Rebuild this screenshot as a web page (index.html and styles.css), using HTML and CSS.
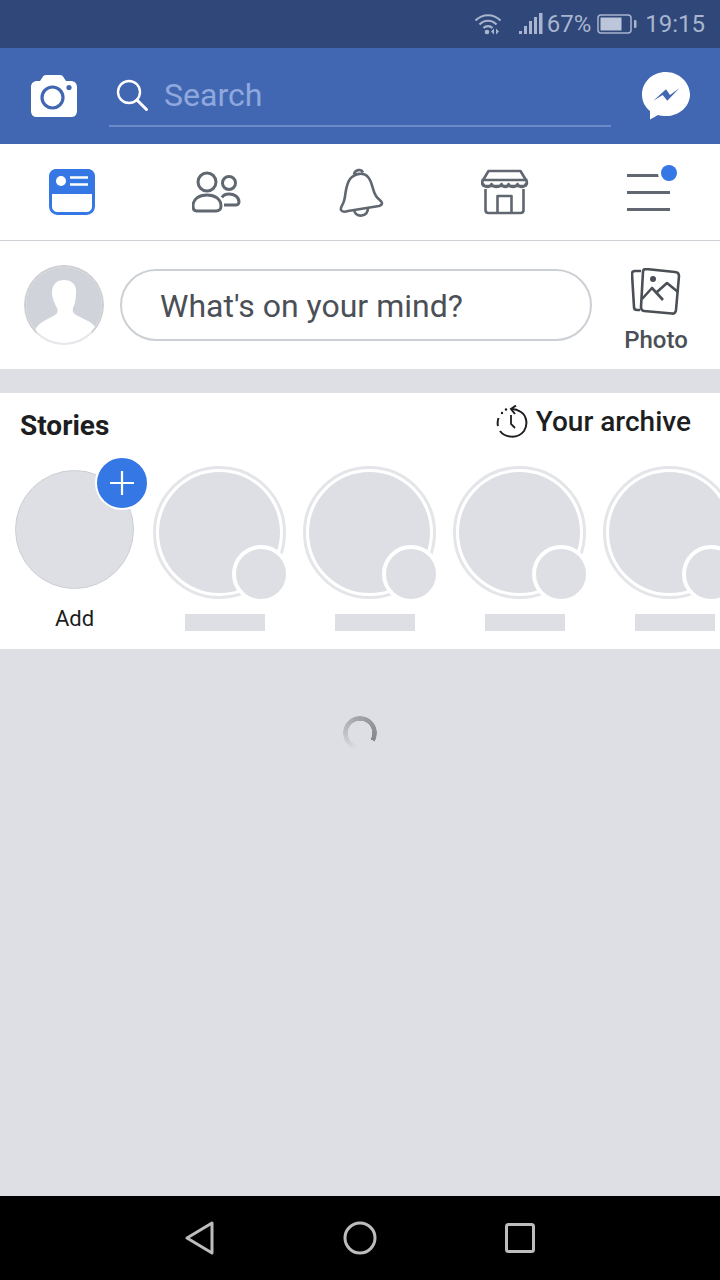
FILE: index.html
```html
<!DOCTYPE html>
<html lang="en">

<head>
	<meta charset="UTF-8">
	<meta name="viewport" content="width=device-width, initial-scale=1.0">
	<title>Facebook</title>
	<link rel="stylesheet" href="styles.css">
</head>

<body>
	<div class="phone">
		<div class="status-bar">
			<svg class="wifi" width="28" height="22" viewBox="0 0 28 22">
				<path d="M1.500 7.500C8.500 .5 19.500 .5 26.500 7.500M5.500 11.500C10.500 6.500 17.500 6.500 22.500 11.500M9.500 15C12 12.500 16 12.500 18.500 15" fill="none" stroke="#a9b5cf" stroke-width="2.200" />
				<circle cx="13" cy="19" r="2.300" fill="#a9b5cf" />
				<path d="M20 15.500v6l-3-3zM22 15.500v6l3-3z" fill="#a9b5cf" />
			</svg>
			<svg class="signal" width="25" height="22" viewBox="0 0 25 22">
				<rect x="0" y="18" width="3" height="3" fill="#a9b5cf" />
				<rect x="5" y="13" width="3" height="8" fill="#a9b5cf" />
				<rect x="10" y="8" width="3" height="13" fill="#a9b5cf" />
				<rect x="15" y="4" width="3" height="17" fill="#a9b5cf" />
				<rect x="20" y="0" width="3.500" height="21" fill="#a9b5cf" />
			</svg>
			<span class="percent">67%</span>
			<svg class="battery" width="40" height="20" viewBox="0 0 40 20">
				<rect x="1" y="1" width="33" height="18" rx="3" fill="none" stroke="#a9b5cf" stroke-width="1.500" />
				<rect x="3.500" y="3.500" width="21" height="13" fill="#bcc6da" />
				<rect x="37" y="6" width="2.500" height="8" rx="1" fill="#a9b5cf" />
			</svg>
			<span class="clock">19:15</span>
		</div>

		<div class="search-bar">
			<svg class="camera" width="46" height="42" viewBox="0 0 46 42">
				<path d="M6 6h3l2-3c1-2 2-3 4-3h14c2 0 3 1 4 3l2 3h5c3 0 6 2 6 6v24c0 3-2 6-5 6H5c-3 0-5-3-5-6V12c0-4 3-6 6-6z" fill="#fff" />
				<circle cx="21.500" cy="22.500" r="10.500" fill="none" stroke="#4267b2" stroke-width="3.200" />
				<circle cx="38" cy="12.500" r="2.600" fill="#4267b2" />
			</svg>
			<div class="search-field">
				<svg class="search-icon" width="34" height="36" viewBox="0 0 34 36">
					<circle cx="13" cy="13" r="11" fill="none" stroke="#fff" stroke-width="2.400" />
					<path d="M21 21l9.500 9.500" stroke="#fff" stroke-width="3" stroke-linecap="round" />
				</svg>
				<span>Search</span>
			</div>
			<svg class="messenger" width="50" height="50" viewBox="0 0 50 50">
				<path d="M25 1C11.500 1 1 11 1 23.500 1 30.500 4 36 9 40v8.500l8-4.500c2.500 .7 5 1.100 8 1.100 13.500 0 24-10 24-21.600S38.500 1 25 1z" fill="#fff" />
				<path d="M12.300 29.700L25 18.300l4 5.700 9.300-6.700-12 12.400-4.600-5.700z" fill="#4267b2" />
			</svg>
		</div>

		<div class="tabs">
			<svg width="48" height="48" viewBox="0 0 48 48">
				<rect x="2.500" y="2.500" width="43" height="43" rx="7" fill="#fff" stroke="#3578e5" stroke-width="3" />
				<path d="M8 1h32a7 7 0 0 1 7 7v18H1V8a7 7 0 0 1 7-7z" fill="#3578e5" />
				<circle cx="13" cy="13" r="5" fill="#fff" />
				<path d="M22 9.500h18M22 16.500h18" stroke="#fff" stroke-width="2.600" />
			</svg>
			<svg width="50" height="48" viewBox="1 0 50 48" fill="none" stroke="#606770" stroke-width="3">
				<circle cx="16" cy="14" r="9" />
				<circle cx="38" cy="15" r="6.500" />
				<path d="M31 29.500c1-2 4-3.500 7-3.500 5 0 10 2.500 10 8 0 2-2 3-3 3h-12" />
				<path d="M2 38c0-7 6-11 14-11s14 4 14 11c0 3-2 5-5 5H6c-3 0-4-2-4-5z" />
			</svg>
			<svg width="46" height="50" viewBox="0 0 46 50" fill="none" stroke="#606770" stroke-width="2.600" stroke-linejoin="round">
				<path d="M15 7.500c1-5 7-6 9-2" />
				<path d="M11 12c5-6 14-7 18-2 5 6 4 13 8 19 2 3 6 5 6 7 0 1.500-1 2.500-3 3L9 44c-3 1-6 1-7-1-1-3 2-5 3-9 2-6 1-15 6-22z" />
				<path d="M15 43c1 4 4 6 8 5.500 3-.5 6-3 6-8" />
			</svg>
			<svg width="50" height="48" viewBox="1.500 0 50 48" fill="none" stroke="#606770" stroke-width="2.600" stroke-linejoin="round">
				<path d="M9 3h32l6 10c1 2 0 5-2 5H5c-2 0-3-3-2-5z" />
				<path d="M2 12h46" />
				<path d="M3 15c2 5 7 5 9 1 2 4 8 4 10 0 2 4 6 4 7 0 2 4 7 4 9 0 2 4 7 4 9-1" />
				<path d="M6 21v21c0 2 1 3 3 3h32c2 0 3-1 3-3V21" />
				<path d="M18 45V28h14v17" />
			</svg>
			<div class="menu-icon">
				<span></span>
				<span></span>
				<span></span>
				<i class="menu-dot"></i>
			</div>
		</div>

		<div class="composer">
			<div class="avatar">
				<svg width="76" height="76" viewBox="0 0 76 76">
					<path d="M0 76V0h76v76z" fill="#d0d3d9" />
					<path d="M26 26c0-9 5-13 12-13s13 4 12 13c0 5-1 11-3 15-1 3 0 5 3 7l12 6c4 2 7 5 9 9l5 13H0l9-13c2-4 5-7 9-9l11-6c3-2 3-4 2-7-2-4-5-10-5-15z" fill="#fff" />
				</svg>
			</div>
			<div class="mind">What's on your mind?</div>
			<div class="photo">
				<svg width="50" height="48" viewBox="0 0 50 48" fill="none" stroke="#4b4f56" stroke-width="2.600" stroke-linejoin="round">
					<path d="M10 3H4c-2 0-3 1-3 3l2 33c0 2 1 3 3 3h3" />
					<path d="M15 1l29 3c3 .3 4 2 4 4l-3 34c0 2-2 4-4 3.500L13 43c-2 0-3-2-3-4l2-35c0-2 1-3 3-3z" />
					<path d="M11 31l10-11 11 12M26 24l10-9 11 9" />
					<circle cx="22" cy="11" r="3" fill="#4b4f56" stroke="none" />
				</svg>
				<span>Photo</span>
			</div>
		</div>

		<div class="stories">
			<div class="stories-head">
				<h2>Stories</h2>
				<div class="archive">
					<svg width="32" height="34" viewBox="0 0 32 34" fill="none" stroke="#1c1e21" stroke-width="2">
						<path d="M2.500 13c-1 3-1 6-.5 8M4 26c5 7 18 8 24 0 4-6 3-15-3-19-3-2-6-3-9-3" />
						<path d="M20 .5L15 4l4 5" stroke-linejoin="miter" />
						<path d="M15 10v9l4 4" stroke-width="1.800" />
						<circle cx="6" cy="8" r="1.200" fill="#1c1e21" stroke="none" />
						<circle cx="10" cy="4.500" r="1.200" fill="#1c1e21" stroke="none" />
					</svg>
					<span>Your archive</span>
				</div>
			</div>
			<div class="story-row">
				<div class="story-add">
					<div class="add-circle">
						<div class="add-badge">
							<svg width="26" height="26" viewBox="0 0 26 26">
								<path d="M13 1v24M1 13h24" stroke="#fff" stroke-width="2.200" />
							</svg>
						</div>
					</div>
					<span>Add</span>
				</div>
				<div class="story">
					<div class="story-ring"><i class="story-thumb"></i></div>
					<div class="story-name"></div>
				</div>
				<div class="story">
					<div class="story-ring"><i class="story-thumb"></i></div>
					<div class="story-name"></div>
				</div>
				<div class="story">
					<div class="story-ring"><i class="story-thumb"></i></div>
					<div class="story-name"></div>
				</div>
				<div class="story">
					<div class="story-ring"><i class="story-thumb"></i></div>
					<div class="story-name"></div>
				</div>
			</div>
		</div>

		<div class="feed">
			<div class="spinner"></div>
		</div>

		<div class="nav-bar">
			<svg width="32" height="36" viewBox="0 0 32 36">
				<path d="M3 18L28 3v30z" fill="none" stroke="#bdbdbd" stroke-width="3" stroke-linejoin="round" />
			</svg>
			<svg width="34" height="34" viewBox="0 0 34 34">
				<circle cx="17" cy="17" r="15" fill="none" stroke="#bdbdbd" stroke-width="3" />
			</svg>
			<svg width="32" height="32" viewBox="0 0 32 32">
				<rect x="2.500" y="2.500" width="27" height="27" rx="2" fill="none" stroke="#bdbdbd" stroke-width="3" />
			</svg>
		</div>
	</div>
</body>

</html>
```

FILE: styles.css
```css
*,
*:before,
*:after {
	box-sizing: border-box;
}

html {
	font: normal 16px/1.2 Roboto, "Liberation Sans", sans-serif;
}

body {
	margin: 0;
	padding: 0;
	background-color: #dddfe4;
	color: #1c1e21;
}

svg {
	display: block;
	flex: 0 0 auto;
}

.phone {
	width: 720px;
	height: 1280px;
	overflow: hidden;
	display: flex;
	flex-direction: column;
}

/* status bar */
.status-bar {
	flex: 0 0 48px;
	display: flex;
	align-items: center;
	justify-content: flex-end;
	padding-right: 15px;
	background-color: #2f4779;
	color: #a9b5cf;
	font-size: 24px;
}

.status-bar .wifi {
	margin-right: 17px;
}

.status-bar .percent {
	margin-left: 3px;
	margin-right: 6px;
}

.status-bar .clock {
	margin-left: 8px;
}

/* blue header */
.search-bar {
	flex: 0 0 96px;
	display: flex;
	align-items: center;
	padding-left: 31px;
	background-color: #4267b2;
}

.search-bar .camera {
	margin-right: 32px;
}

.search-field {
	width: 502px;
	height: 50px;
	margin-top: 12px;
	padding: 0 0 12px 7px;
	display: flex;
	align-items: center;
	gap: 14px;
	border-bottom: 2px solid #6b8aca;
	color: #8fa8dd;
	font-size: 32px;
}

.search-icon {
	margin-top: 4px;
}

.search-bar .messenger {
	margin-left: 30px;
}

/* tabs */
.tabs {
	flex: 0 0 97px;
	display: flex;
	align-items: center;
	justify-content: space-between;
	padding: 0 50px 0 48px;
	background-color: #fff;
	border-bottom: 1px solid #ccd0d5;
}

.menu-icon {
	position: relative;
	width: 43px;
	display: flex;
	flex-direction: column;
	gap: 14px;
}

.menu-icon span {
	display: block;
	height: 3px;
	background-color: #606770;
}

.menu-dot {
	position: absolute;
	top: -9px;
	right: -7px;
	width: 16px;
	height: 16px;
	border-radius: 50%;
	background-color: #3578e5;
	box-shadow: 0 0 0 3px #fff;
}

/* composer */
.composer {
	flex: 0 0 128px;
	display: flex;
	align-items: center;
	padding-left: 24px;
	background-color: #fff;
}

.avatar {
	width: 80px;
	height: 80px;
	border-radius: 50%;
	border: 2px solid #ced0d4;
	border-bottom-color: #e6e7ea;
	overflow: hidden;
}

.mind {
	width: 472px;
	height: 72px;
	margin-left: 16px;
	padding: 3px 0 0 38px;
	display: flex;
	align-items: center;
	border: 2px solid #ccd0d5;
	border-radius: 36px;
	color: #4b4f56;
	font-size: 32px;
}

.photo {
	margin: 12px 0 0 32px;
	width: 64px;
	display: flex;
	flex-direction: column;
	align-items: center;
	gap: 10px;
	color: #4b4f56;
	font-size: 24px;
	font-weight: 500;
}

/* stories */
.stories {
	flex: 0 0 256px;
	margin-top: 24px;
	background-color: #fff;
	overflow: hidden;
}

.stories-head {
	height: 73px;
	display: flex;
	align-items: flex-start;
	justify-content: space-between;
	padding: 12px 29px 0 20px;
}

.stories-head h2 {
	margin: 4px 0 0;
	font-size: 28px;
	font-weight: 700;
}

.archive {
	display: flex;
	align-items: center;
	gap: 8px;
	font-size: 28px;
	font-weight: 500;
	color: #1c1e21;
}

.story-row {
	display: flex;
	padding-left: 15px;
}

.story-add {
	flex: 0 0 119px;
	margin-right: 19px;
	padding-top: 4px;
	display: flex;
	flex-direction: column;
	align-items: center;
	gap: 17px;
	font-size: 22px;
}

.add-circle {
	position: relative;
	width: 119px;
	height: 119px;
	border-radius: 50%;
	border: 1px solid #ccd0d5;
	background-color: #dddfe4;
}

.add-badge {
	position: absolute;
	top: -15px;
	right: -16px;
	width: 54px;
	height: 54px;
	display: flex;
	align-items: center;
	justify-content: center;
	border: 2px solid #fff;
	border-radius: 50%;
	background-color: #3578e5;
}

.story {
	flex: 0 0 133px;
	margin-right: 17px;
	display: flex;
	flex-direction: column;
	align-items: center;
}

.story-ring {
	position: relative;
	width: 133px;
	height: 133px;
	border-radius: 50%;
	border: 3px solid #e4e5e9;
	background-color: #dddfe4;
	background-clip: content-box;
	padding: 3px;
}

.story-thumb {
	position: absolute;
	right: -7px;
	bottom: -7px;
	width: 58px;
	height: 58px;
	border-radius: 50%;
	border: 4px solid #fff;
	background-color: #dddfe4;
}

.story-name {
	width: 80px;
	height: 17px;
	margin-top: 15px;
	margin-left: 11px;
	background-color: #dddfe4;
}

/* feed */
.feed {
	flex: 1 1 auto;
	display: flex;
	justify-content: center;
	padding-top: 67px;
	background-color: #dddfe4;
}

.spinner {
	width: 34px;
	height: 34px;
	border-radius: 50%;
	background: conic-gradient(from 190deg, rgba(136, 138, 142, 0) 0deg, #a5a7ab 150deg, #85878b 290deg, rgba(136, 138, 142, 0) 291deg);
	-webkit-mask: radial-gradient(circle, transparent 12px, #000 12.5px);
	mask: radial-gradient(circle, transparent 12px, #000 12.5px);
}

/* android keys */
.nav-bar {
	flex: 0 0 84px;
	display: flex;
	align-items: center;
	padding-left: 184px;
	background-color: #000;
}

.nav-bar svg:nth-child(2) {
	margin-left: 127px;
}

.nav-bar svg:nth-child(3) {
	margin-left: 127px;
}
```
